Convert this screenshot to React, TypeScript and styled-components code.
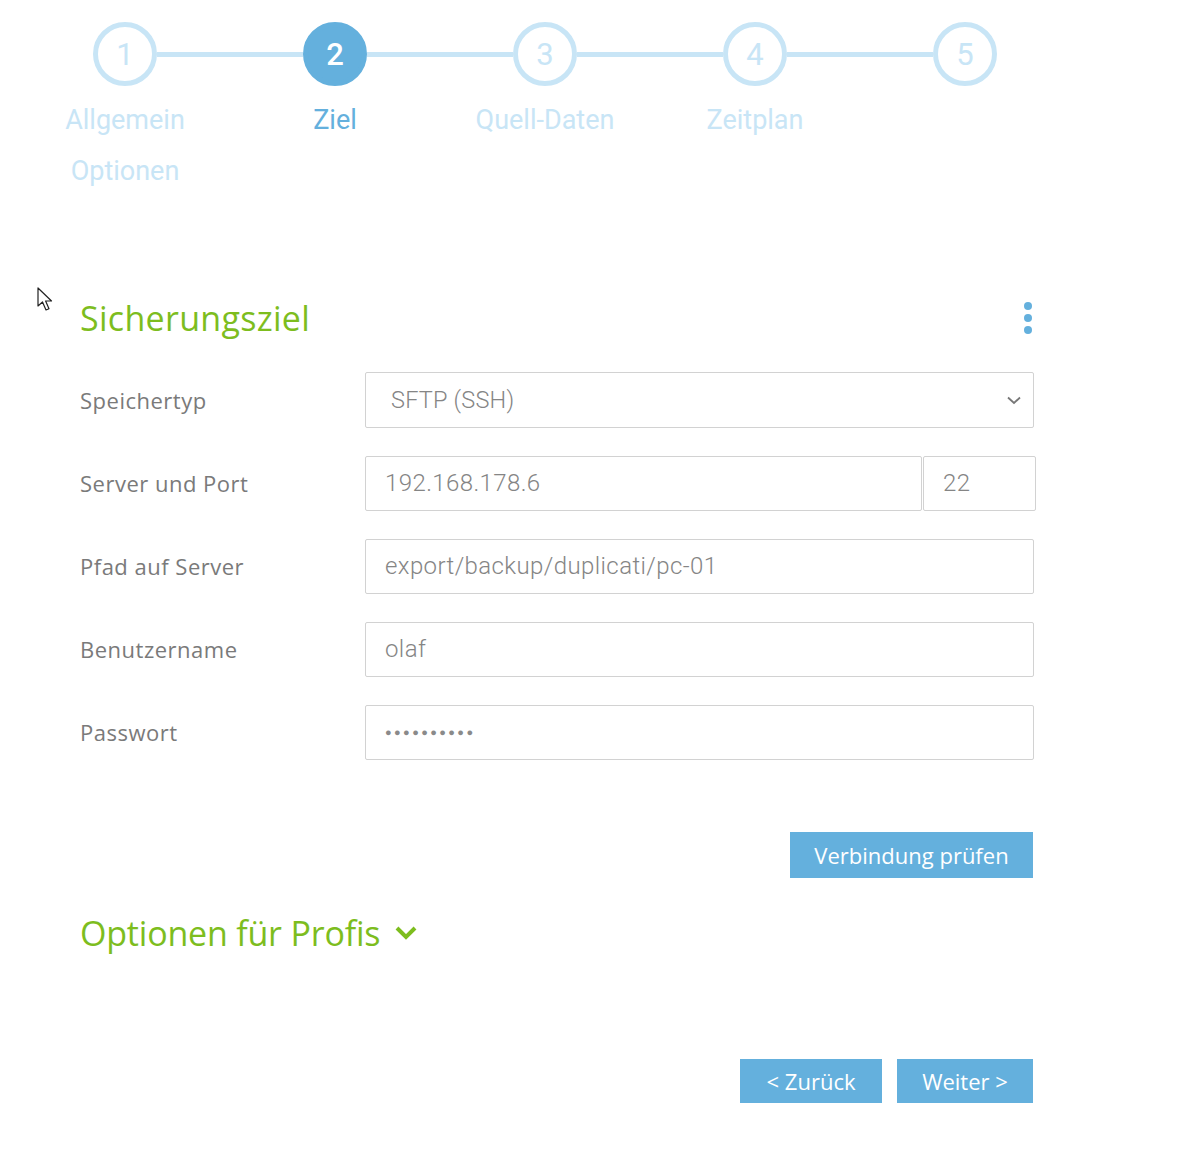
import React from "react";
import styled, { createGlobalStyle } from "styled-components";

const Global = createGlobalStyle`
  html, body { margin: 0; padding: 0; background: #fff; }
  body { font-family: "Open Sans", "Noto Sans", sans-serif; }
  * { box-sizing: border-box; }
`;

const BLUE = "#64b0dd";
const LIGHT = "#c8e5f6";
const GREEN = "#7dbd1e";
const GRAY = "#7a7a7a";

const Page = styled.div`
  position: relative;
  width: 1186px;
  min-height: 1170px;
  padding: 22px 0 0 20px;
`;

const Stepper = styled.div`
  display: flex;
`;

const Step = styled.div`
  width: 210px;
  display: flex;
  flex-direction: column;
  align-items: center;
`;

const CircleRow = styled.div`
  width: 100%;
  display: flex;
  align-items: center;
`;

const HalfLine = styled.div<{ $hidden?: boolean }>`
  flex: 1;
  height: 5px;
  background: ${(p) => (p.$hidden ? "transparent" : LIGHT)};
`;

const Circle = styled.div<{ $active?: boolean }>`
  width: 64px;
  height: 64px;
  border-radius: 50%;
  border: 5px solid ${(p) => (p.$active ? BLUE : LIGHT)};
  background: ${(p) => (p.$active ? BLUE : "#fff")};
  color: ${(p) => (p.$active ? "#fff" : LIGHT)};
  display: flex;
  align-items: center;
  justify-content: center;
  font-family: Roboto, sans-serif;
  font-size: 31px;
  font-weight: ${(p) => (p.$active ? 500 : 400)};
`;

const StepLabel = styled.div<{ $active?: boolean }>`
  margin-top: 9px;
  font-family: Roboto, sans-serif;
  font-size: 27px;
  line-height: 51px;
  text-align: center;
  color: ${(p) => (p.$active ? BLUE : LIGHT)};
  width: 200px;
`;

const Content = styled.div`
  width: 954px;
  margin: 99px 0 0 60px;
`;

const TitleRow = styled.div`
  display: flex;
  align-items: center;
  justify-content: space-between;
  height: 44px;
`;

const Title = styled.h2<{ $spacing?: number }>`
  margin: 0;
  font-family: "Open Sans", "Noto Sans", sans-serif;
  font-weight: 400;
  font-size: 34px;
  line-height: 44px;
  letter-spacing: ${(p) => p.$spacing ?? 0}px;
  color: ${GREEN};
`;

const Dots = styled.div`
  display: flex;
  flex-direction: column;
  gap: 4px;
  margin-right: 2px;
`;

const Dot = styled.span`
  width: 8px;
  height: 8px;
  border-radius: 50%;
  background: ${BLUE};
`;

const Form = styled.div`
  margin-top: 32px;
  display: flex;
  flex-direction: column;
  gap: 27px;
`;

const Row = styled.div`
  display: flex;
  align-items: center;
  height: 56px;
`;

const Label = styled.div`
  width: 285px;
  flex: none;
  font-family: "Open Sans", "Noto Sans", sans-serif;
  font-size: 22px;
  letter-spacing: 0.5px;
  color: ${GRAY};
`;

const Field = styled.div<{ $w?: number }>`
  width: ${(p) => p.$w ?? 669}px;
  height: 55px;
  flex: none;
  border: 1px solid #d2d2d2;
  border-radius: 2px;
  display: flex;
  align-items: center;
  padding: 0 19px;
  font-family: Roboto, sans-serif;
  font-weight: 300;
  font-size: 24px;
  letter-spacing: 0.4px;
  color: #858585;
  background: #fff;
`;

const SelectField = styled(Field)`
  height: 56px;
  padding: 0 12px 0 25px;
  justify-content: space-between;
  font-size: 23.5px;
  letter-spacing: 0.2px;
`;

const InputsPair = styled.div`
  display: flex;
  flex: none;
  gap: 1px;
`;

const Masked = styled.span`
  font-family: "DejaVu Sans", sans-serif;
  font-size: 11px;
  letter-spacing: 2.4px;
  color: #8a8a8a;
`;

const ActionRow = styled.div`
  margin-top: 72px;
  display: flex;
  justify-content: flex-end;
  padding-right: 1px;
`;

const Button = styled.button<{ $w: number; $h?: number }>`
  width: ${(p) => p.$w}px;
  height: ${(p) => p.$h ?? 46}px;
  border: none;
  border-radius: 0;
  background: ${BLUE};
  color: #fff;
  font-family: "Open Sans", "Noto Sans", sans-serif;
  font-size: 22px;
  cursor: pointer;
  padding: 0;
`;

const ProRow = styled.div`
  margin-top: 33px;
  display: flex;
  align-items: center;
  gap: 15px;
  height: 44px;
`;

const NavRow = styled.div`
  margin-top: 104px;
  display: flex;
  justify-content: flex-end;
  gap: 15px;
  padding-right: 1px;
`;

const Cursor = styled.svg`
  position: absolute;
  left: 37px;
  top: 287px;
`;

const steps = ["Allgemein Optionen", "Ziel", "Quell-Daten", "Zeitplan", ""];

export default function App() {
  return (
    <Page>
      <Global />
      <Stepper>
        {steps.map((s, i) => (
          <Step key={i}>
            <CircleRow>
              <HalfLine $hidden={i === 0} />
              <Circle $active={i === 1}>{i + 1}</Circle>
              <HalfLine $hidden={i === steps.length - 1} />
            </CircleRow>
            <StepLabel $active={i === 1}>{s}</StepLabel>
          </Step>
        ))}
      </Stepper>

      <Content>
        <TitleRow>
          <Title $spacing={0.3}>Sicherungsziel</Title>
          <Dots>
            <Dot />
            <Dot />
            <Dot />
          </Dots>
        </TitleRow>

        <Form>
          <Row>
            <Label>Speichertyp</Label>
            <SelectField>
              <span>SFTP (SSH)</span>
              <svg width="14" height="9" viewBox="0 0 14 9">
                <path d="M1 1.5 L7 7 L13 1.5" fill="none" stroke="#777" strokeWidth="1.8" />
              </svg>
            </SelectField>
          </Row>
          <Row>
            <Label>Server und Port</Label>
            <InputsPair>
              <Field $w={557}>192.168.178.6</Field>
              <Field $w={113}>22</Field>
            </InputsPair>
          </Row>
          <Row>
            <Label>Pfad auf Server</Label>
            <Field>export/backup/duplicati/pc-01</Field>
          </Row>
          <Row>
            <Label>Benutzername</Label>
            <Field>olaf</Field>
          </Row>
          <Row>
            <Label>Passwort</Label>
            <Field>
              <Masked>●●●●●●●●●●</Masked>
            </Field>
          </Row>
        </Form>

        <ActionRow>
          <Button $w={243}>Verbindung prüfen</Button>
        </ActionRow>

        <ProRow>
          <Title $spacing={-0.2}>Optionen für Profis</Title>
          <svg width="22" height="14" viewBox="0 0 22 14">
            <path d="M2 2 L11 11 L20 2" fill="none" stroke={GREEN} strokeWidth="4" />
          </svg>
        </ProRow>

        <NavRow>
          <Button $w={142} $h={44}>&lt; Zurück</Button>
          <Button $w={136} $h={44}>Weiter &gt;</Button>
        </NavRow>
      </Content>

      <Cursor width="20" height="28" viewBox="0 0 20 28">
        <path
          d="M1 1 L1 19 L5.5 15 L9 23 L12 21.8 L8.6 14 L14.5 14 Z"
          fill="#fff"
          stroke="#222"
          strokeWidth="1.2"
          strokeLinejoin="round"
        />
      </Cursor>
    </Page>
  );
}
